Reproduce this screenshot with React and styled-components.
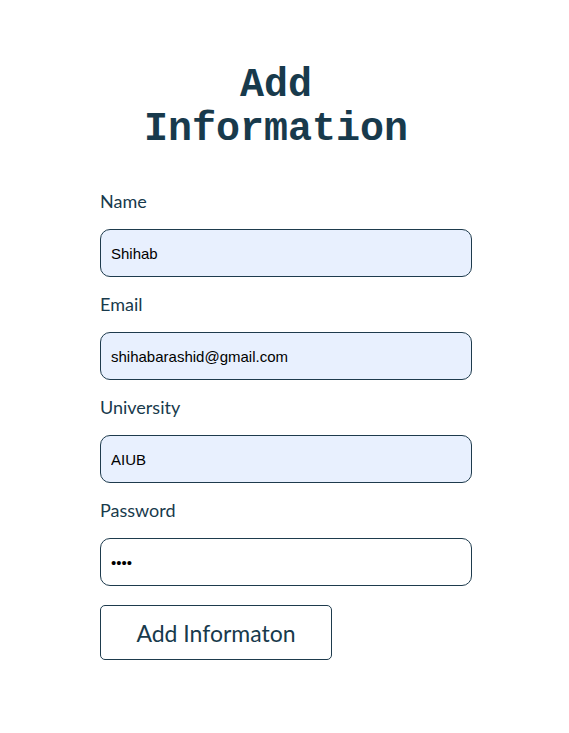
import React from "react";
import styled, { createGlobalStyle } from "styled-components";

const Global = createGlobalStyle`
  body { margin: 0; background: #fff; }
  * { box-sizing: border-box; }
`;

const Page = styled.div`
  padding: 64px 0 40px 100px;
`;

const Form = styled.form`
  width: 372px;
  display: flex;
  flex-direction: column;
`;

const Title = styled.h1`
  margin: 0 0 38px 36px;
  width: 280px;
  text-align: center;
  font-family: "Liberation Mono", "Courier New", monospace;
  font-weight: bold;
  font-size: 40px;
  line-height: 44px;
  color: #183a4c;
`;

const Field = styled.div`
  display: flex;
  flex-direction: column;
  gap: 17px;
  margin-bottom: 16px;
`;

const Label = styled.label`
  font-family: "Lato", "Open Sans", sans-serif;
  font-size: 18px;
  line-height: 22px;
  color: #183a4c;
`;

const Input = styled.input`
  height: 48px;
  width: 100%;
  border: 1px solid #1e3b4d;
  border-radius: 10px;
  padding: 0 10px;
  font-family: "Liberation Sans", Arial, sans-serif;
  font-size: 15px;
  color: #000;
  background: ${(p) => (p.$filled ? "#e8f0fe" : "#fff")};
  outline: none;
`;

const Button = styled.button`
  margin-top: 3px;
  width: 232px;
  height: 55px;
  border: 1px solid #1e3b4d;
  border-radius: 5px;
  background: #fff;
  font-family: "Lato", "Open Sans", sans-serif;
  font-size: 23px;
  color: #183a4c;
  cursor: pointer;
`;

const fields = [
  { label: "Name", type: "text", value: "Shihab", filled: true },
  { label: "Email", type: "email", value: "shihabarashid@gmail.com", filled: true },
  { label: "University", type: "text", value: "AIUB", filled: true },
  { label: "Password", type: "password", value: "1234", filled: false },
];

export default function App() {
  return (
    <>
      <Global />
      <Page>
        <Form onSubmit={(e) => e.preventDefault()}>
          <Title>Add Information</Title>
          {fields.map((f) => (
            <Field key={f.label}>
              <Label>{f.label}</Label>
              <Input type={f.type} defaultValue={f.value} $filled={f.filled} />
            </Field>
          ))}
          <Button type="submit">Add Informaton</Button>
        </Form>
      </Page>
    </>
  );
}
